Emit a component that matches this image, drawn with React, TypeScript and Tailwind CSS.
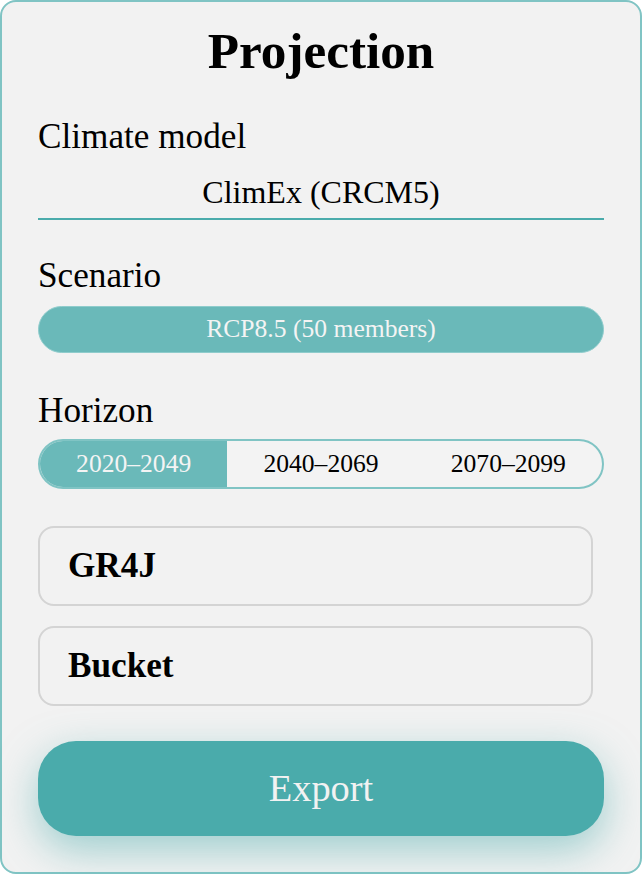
import { useState } from 'react';

const horizons = ['2020–2049', '2040–2069', '2070–2099'];
const models = ['GR4J', 'Bucket'];

export default function App() {
  const [horizon, setHorizon] = useState(0);

  return (
    <div className="w-[642px] h-[874px] bg-white">
      <div
        className="flex flex-col h-[874px] border-2 border-[#80c4c4] rounded-[16px] bg-[#f2f2f2] px-[36px] pt-[23px] text-black"
        style={{ fontFamily: '"Liberation Serif", "Times New Roman", serif' }}
      >
        <h1 className="text-center font-bold text-[51.2px] leading-[51px]">Projection</h1>

        <div className="mt-[41px] text-[35.2px] leading-[40px]">Climate model</div>
        <div className="mt-[15px] h-[48px] pb-[6px] border-b-2 border-[#4aabab] text-center text-[32px] leading-[40px]">
          ClimEx (CRCM5)
        </div>

        <div className="mt-[36px] text-[35.2px] leading-[40px]">Scenario</div>
        <div className="mt-[10px] h-[47px] flex items-center justify-center rounded-full border border-[#8fcccc] bg-[#6ab9b9] text-[25.6px] text-[#f4f4f4]">
          RCP8.5 (50 members)
        </div>

        <div className="mt-[38px] text-[35.2px] leading-[40px]">Horizon</div>
        <div className="mt-[8px] h-[50px] flex rounded-full border-2 border-[#80c4c4] overflow-hidden bg-[#f3f3f3]">
          {horizons.map((h, i) => (
            <button
              key={h}
              onClick={() => setHorizon(i)}
              className={
                i === horizon
                  ? 'flex-1 flex items-center justify-center bg-[#6ab9b9] text-[#f4f4f4] text-[25.6px]'
                  : 'flex-1 flex items-center justify-center text-black text-[25.6px]'
              }
            >
              {h}
            </button>
          ))}
        </div>

        <div className="mt-[37px] flex flex-col gap-[20px] w-[555px]">
          {models.map((m) => (
            <div
              key={m}
              className="h-[80px] flex items-center rounded-[16px] border-2 border-[#d4d4d4] pl-[28px] font-bold text-[35.2px]"
            >
              {m}
            </div>
          ))}
        </div>

        <button className="mt-[35px] h-[95px] w-full rounded-[38px] bg-[#4aabab] text-[38.4px] text-[#f2f2f2] shadow-[0_14px_40px_rgba(74,171,171,0.5)]">
          Export
        </button>
      </div>
    </div>
  );
}
